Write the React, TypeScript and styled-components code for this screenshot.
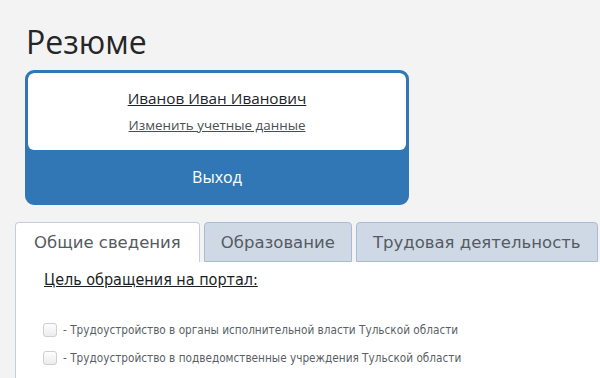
import React from 'react';
import styled, { createGlobalStyle } from 'styled-components';

const GlobalStyle = createGlobalStyle`
  html, body {
    margin: 0;
    padding: 0;
    background: #f3f3f3;
    overflow: hidden;
  }
`;

const goals = [
  'Трудоустройство в органы исполнительной власти Тульской области',
  'Трудоустройство в подведомственные учреждения Тульской области',
  'Прохождение стажировки',
];

const tabs = ['Общие сведения', 'Образование', 'Трудовая деятельность'];

const App = () => (
  <React.Fragment>
    <GlobalStyle />
    <Page>
      <Title>Резюме</Title>
      <UserCard>
        <UserInfo>
          <UserName href="#">Иванов Иван Иванович</UserName>
          <EditLink href="#">Изменить учетные данные</EditLink>
        </UserInfo>
        <LogoutButton>Выход</LogoutButton>
      </UserCard>
      <TabBar>
        {tabs.map((t, i) => (
          <Tab key={t} active={i === 0}>
            {t}
          </Tab>
        ))}
      </TabBar>
      <Panel>
        <SectionLink href="#">Цель обращения на портал:</SectionLink>
        <GoalList>
          {goals.map((g) => (
            <GoalRow key={g}>
              <Check type="checkbox" />
              <span>- {g}</span>
            </GoalRow>
          ))}
        </GoalList>
      </Panel>
    </Page>
  </React.Fragment>
);

export default App;

const Page = styled('main')`
  padding: 20px 0 0 15px;
  font-family: 'Open Sans', sans-serif;
`;

const Title = styled('h1')`
  margin: 0 0 7px 11px;
  font-size: 32px;
  font-weight: 400;
  line-height: 43px;
  color: #262626;
`;

const UserCard = styled('div')`
  width: 378px;
  margin-left: 10px;
  border: 3px solid #3277b5;
  border-radius: 9px;
  background: #3277b5;
  overflow: hidden;
`;

const UserInfo = styled('div')`
  display: flex;
  flex-direction: column;
  align-items: center;
  height: 77px;
  background: #fff;
  border-radius: 6px;
  padding-top: 14px;
  box-sizing: border-box;
`;

const UserName = styled('a')`
  font-size: 15.3px;
  line-height: 22px;
  color: #1e2328;
  text-decoration: underline;
`;

const EditLink = styled('a')`
  margin-top: 7px;
  font-size: 13.4px;
  line-height: 18px;
  color: #4a4f55;
  text-decoration: underline;
`;

const LogoutButton = styled('div')`
  height: 52px;
  padding-top: 2px;
  box-sizing: border-box;
  display: flex;
  align-items: center;
  justify-content: center;
  color: #fff;
  font-size: 16px;
`;

const TabBar = styled('div')`
  display: flex;
  gap: 4px;
  margin-top: 17px;
  align-items: flex-end;
`;

const Tab = styled('div')<{ active?: boolean }>`
  flex-shrink: 0;
  white-space: nowrap;
  height: 40px;
  padding: 0 ${(p) => (p.active ? '18px' : '16px')};
  display: flex;
  align-items: center;
  box-sizing: border-box;
  font-family: 'DejaVu Sans', Verdana, sans-serif;
  font-size: 16.5px;
  color: #555b62;
  border: 1px solid ${(p) => (p.active ? '#c2cedc' : '#a9bcd4')};
  border-bottom: ${(p) => (p.active ? 'none' : '1px solid #a9bcd4')};
  border-radius: 4px 4px 0 0;
  background: ${(p) => (p.active ? '#fff' : '#cfd9e6')};
`;

const Panel = styled('div')`
  background: #fff;
  border-left: 1px solid #c2cedc;
  padding: 6px 0 0 28px;
  height: 130px;
`;

const SectionLink = styled('a')`
  display: inline-block;
  font-family: 'DejaVu Sans Condensed', 'DejaVu Sans', sans-serif;
  font-size: 16px;
  color: #1a1f26;
  text-decoration: underline;
`;

const GoalList = styled('div')`
  display: flex;
  flex-direction: column;
  gap: 8px;
  margin-top: 30px;
`;

const GoalRow = styled('label')`
  display: flex;
  align-items: center;
  gap: 6px;
  font-family: 'DejaVu Sans Condensed', 'DejaVu Sans', sans-serif;
  font-size: 11.7px;
  color: #5a5f66;
  height: 20px;
`;

const Check = styled('input')`
  appearance: none;
  margin: 0 0 0 -1px;
  width: 14px;
  height: 14px;
  border: 1px solid #cfcfcf;
  border-radius: 3px;
  background: linear-gradient(#fdfdfd, #ececec);
  box-sizing: border-box;
`;
